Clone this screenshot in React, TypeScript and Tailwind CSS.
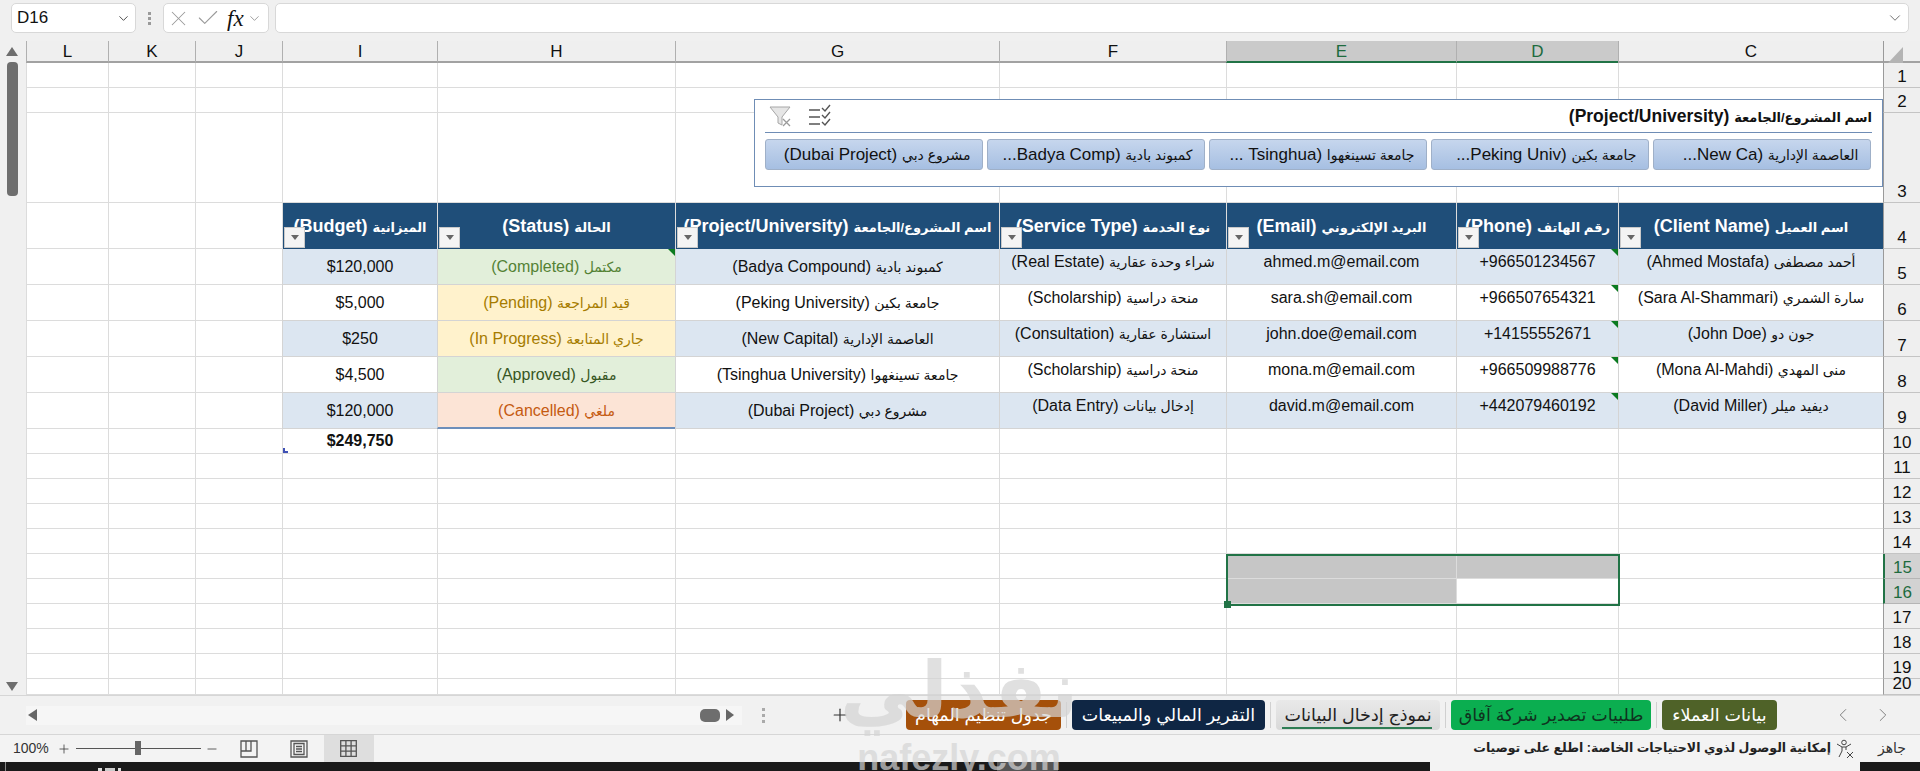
import React from "react";
import { ChevronDown, ChevronLeft, ChevronRight, X, Check, Plus, Minus } from "lucide-react";

const FONT = '"Liberation Sans", "DejaVu Sans", sans-serif';

const LETTERS = ["L", "K", "J", "I", "H", "G", "F", "E", "D", "C"];

type Row = {
  client: string;
  phone: string;
  email: string;
  service: string;
  project: string;
  status: string;
  statusClass: string;
  budget: string;
};

const ROWS: Row[] = [
  { client: "أحمد مصطفى (Ahmed Mostafa)", phone: "+966501234567", email: "ahmed.m@email.com", service: "شراء وحدة عقارية (Real Estate)", project: "كمبوند بادية (Badya Compound)", status: "مكتمل (Completed)", statusClass: "bg-[#e2efda] text-[#548235]", budget: "$120,000" },
  { client: "سارة الشمري (Sara Al-Shammari)", phone: "+966507654321", email: "sara.sh@email.com", service: "منحة دراسية (Scholarship)", project: "جامعة بكين (Peking University)", status: "قيد المراجعة (Pending)", statusClass: "bg-[#fff2cc] text-[#a67c00]", budget: "$5,000" },
  { client: "جون دو (John Doe)", phone: "+14155552671", email: "john.doe@email.com", service: "استشارة عقارية (Consultation)", project: "العاصمة الإدارية (New Capital)", status: "جاري المتابعة (In Progress)", statusClass: "bg-[#fff2cc] text-[#a67c00]", budget: "$250" },
  { client: "منى المهدي (Mona Al-Mahdi)", phone: "+966509988776", email: "mona.m@email.com", service: "منحة دراسية (Scholarship)", project: "جامعة تسينغهوا (Tsinghua University)", status: "مقبول (Approved)", statusClass: "bg-[#e2efda] text-[#375623]", budget: "$4,500" },
  { client: "ديفيد ميلر (David Miller)", phone: "+442079460192", email: "david.m@email.com", service: "إدخال بيانات (Data Entry)", project: "مشروع دبي (Dubai Project)", status: "ملغي (Cancelled)", statusClass: "bg-[#fce4d6] text-[#c55a11]", budget: "$120,000" },
];

const HEADERS = [
  "الميزانية (Budget)",
  "الحالة (Status)",
  "اسم المشروع/الجامعة (Project/University)",
  "نوع الخدمة (Service Type)",
  "البريد الإلكتروني (Email)",
  "رقم الهاتف (Phone)",
  "اسم العميل (Client Name)",
];

const SLICER = [
  "مشروع دبي (Dubai Project)",
  "كمبوند بادية (Badya Comp...",
  "جامعة تسينغهوا (Tsinghua ...",
  "جامعة بكين (Peking Univ...",
  "العاصمة الإدارية (New Ca...",
];

function Mixed({ text, small = false }: { text: string; small?: boolean }) {
  const at = text.indexOf(" (");
  if (at < 0) return <span>{text}</span>;
  return (
    <span>
      <span className={small ? "text-[13px]" : "text-[14px]"}>{text.slice(0, at)}</span>
      {text.slice(at)}
    </span>
  );
}

function Blank({ cls = "" }: { cls?: string }) {
  return <div className={"border-l border-b border-[#dcdcdc] " + cls} />;
}

function Blanks({ n }: { n: number }) {
  return (
    <>
      {Array.from({ length: n }).map((_, i) => (
        <Blank key={i} />
      ))}
    </>
  );
}

function RowNum({ n, active = false }: { n: number; active?: boolean }) {
  return (
    <div
      className={
        "flex items-end justify-center border-b text-[17px] leading-[20px] " +
        (active
          ? "bg-[#d2d2d2] text-[#1e6b3e] border-l-2 border-l-[#217346] border-b-[#b5b5b5]"
          : "bg-[#efefef] text-[#111] border-l border-l-[#9a9a9a] border-b-[#c4c4c4]")
      }
    >
      {n}
    </div>
  );
}

function GreenTick() {
  return <span className="absolute right-0 top-0 h-0 w-0 border-l-[7px] border-t-[7px] border-l-transparent border-t-[#0b7a20]" />;
}

function HeaderCell({ text }: { text: string }) {
  return (
    <div className="relative flex items-center justify-center overflow-hidden whitespace-nowrap border-l border-[#dcdcdc] bg-[#1f4e79] pt-[1px] text-[18px] font-bold text-white" dir="rtl">
      <Mixed text={text} small />
      <span className="absolute bottom-[1px] left-[1px] flex h-[21px] w-[21px] items-center justify-center border border-[#c9c9c9] bg-[#f4f4f4]">
        <span className="h-0 w-0 border-x-[4px] border-t-[5px] border-x-transparent border-t-[#666]" />
      </span>
    </div>
  );
}

function DataCell({ text, cls = "", top = false, tick = false, rtl = true }: { text: string; cls?: string; top?: boolean; tick?: boolean; rtl?: boolean }) {
  return (
    <div
      dir={rtl ? "rtl" : "ltr"}
      className={
        "relative flex justify-center overflow-hidden whitespace-nowrap border-l border-b border-[#d4d4d4] text-[16px] leading-[20px] " +
        (top ? "items-start pt-[3px] " : "items-center pt-[1px] ") +
        cls
      }
    >
      <Mixed text={text} />
      {tick && <GreenTick />}
    </div>
  );
}

function DataRow({ r, i }: { r: Row; i: number }) {
  const band = i % 2 === 0 ? "bg-[#dce6f1] text-[#111]" : "bg-white text-[#111]";
  return (
    <>
      <Blanks n={3} />
      <DataCell text={r.budget} cls={band} rtl={false} />
      <DataCell text={r.status} cls={r.statusClass + (i === 4 ? " border-b-2 border-b-[#6d8fbb]" : "")} tick={i === 0} />
      <DataCell text={r.project} cls={band} />
      <DataCell text={r.service} cls={band} top />
      <DataCell text={r.email} cls={band} top rtl={false} />
      <DataCell text={r.phone} cls={band} top tick rtl={false} />
      <DataCell text={r.client} cls={band} top />
      <RowNum n={5 + i} />
    </>
  );
}

function Slicer() {
  return (
    <div className="absolute left-[728px] top-[58px] flex h-[88px] w-[1129px] flex-col border border-[#6f8db5] bg-white px-[10px]">
      <div className="flex h-[33px] items-center justify-between border-b border-[#6f8db5]">
        <div className="flex items-center gap-[16px] pl-[3px]">
          <svg width="24" height="24" viewBox="0 0 24 24" fill="none">
            <path d="M2 3h20l-8 10v8l-4-2v-6z" fill="#e6e6e6" stroke="#a6a6a6" />
            <path d="M15 15l7 7M22 15l-7 7" stroke="#9a9a9a" strokeWidth="1.3" />
          </svg>
          <svg width="24" height="24" viewBox="0 0 24 24" fill="none" stroke="#555" strokeWidth="1.4">
            <path d="M1 6h11M1 13h11M1 20h11" />
            <path d="M14 4l3 3 5-6M14 11l3 3 5-6M14 18l3 3 5-6" />
          </svg>
        </div>
        <span dir="rtl" className="text-[17.5px] font-bold text-[#111]">
          <Mixed text="اسم المشروع/الجامعة (Project/University)" small />
        </span>
      </div>
      <div className="mt-[6px] flex gap-[4.5px]">
        {SLICER.map((t) => (
          <div
            key={t}
            dir="rtl"
            className="flex h-[31px] w-[217.5px] items-center overflow-hidden whitespace-nowrap rounded-[3px] border border-[#9fb0c8] bg-gradient-to-b from-[#c6d6ed] to-[#a6bfe2] px-[11px] text-[17px] text-[#111]"
          >
            <Mixed text={t} />
          </div>
        ))}
      </div>
    </div>
  );
}

function Selection() {
  return (
    <div className="absolute left-[1200px] top-[513px] h-[52px] w-[394px] border-2 border-[#217346]">
      <span className="absolute -bottom-[4px] -left-[4px] h-[7px] w-[7px] bg-[#217346]" />
    </div>
  );
}

function SheetTab({ text, cls }: { text: string; cls: string }) {
  return (
    <div dir="rtl" className={"flex h-[30px] items-center justify-center whitespace-nowrap rounded-[4px] text-[17.5px] " + cls}>
      {text}
    </div>
  );
}

function TabDivider() {
  return <span className="h-[26px] w-px bg-[#d0d0d0]" />;
}

function TabsBar() {
  return (
    <div className="flex h-[40px] items-center border-y border-[#d6d6d6] bg-[#f1f1f1]">
      <div className="ml-[26px] flex h-[19px] w-[716px] items-center bg-[#f6f6f6] pl-[2px] pr-[8px]">
        <span className="h-0 w-0 border-y-[6px] border-r-[9px] border-y-transparent border-r-[#666]" />
        <span className="ml-auto h-[13px] w-[20px] rounded-[5px] bg-[#6e6e6e]" />
        <span className="ml-[6px] h-0 w-0 border-y-[6px] border-l-[8px] border-y-transparent border-l-[#666]" />
      </div>
      <div className="ml-[20px] flex flex-col gap-[3px]">
        <span className="h-[3px] w-[3px] bg-[#aaa]" />
        <span className="h-[3px] w-[3px] bg-[#aaa]" />
        <span className="h-[3px] w-[3px] bg-[#aaa]" />
      </div>
      <Plus size={20} strokeWidth={1.4} className="ml-[65px] text-[#333]" />
      <div className="ml-[56px] flex items-center gap-[5px]">
        <SheetTab text="جدول تنظيم المهام" cls="w-[155px] bg-[#a5500a] text-white" />
        <TabDivider />
        <SheetTab text="التقرير المالي والمبيعات" cls="w-[193px] bg-[#0f2644] text-white" />
        <TabDivider />
        <div dir="rtl" className="relative flex h-[30px] w-[164px] items-center justify-center whitespace-nowrap rounded-[4px] bg-gradient-to-b from-[#e9e9e9] to-[#d9d9d9] text-[17.5px] text-[#222]">
          نموذج إدخال البيانات
          <span className="absolute bottom-[1px] left-[6px] right-[8px] h-[2px] bg-[#2e7d54]" />
        </div>
        <TabDivider />
        <SheetTab text="طلبيات تصدير شركة آفاق" cls="w-[200px] bg-[#0bae50] text-[#10331f]" />
        <TabDivider />
        <SheetTab text="بيانات العملاء" cls="w-[115px] bg-[#4f6228] text-white" />
      </div>
      <ChevronLeft size={22} strokeWidth={1} className="ml-[55px] text-[#777]" />
      <ChevronRight size={22} strokeWidth={1} className="ml-[18px] text-[#777]" />
    </div>
  );
}

function StatusBar() {
  return (
    <div className="flex h-[27px] items-center bg-[#f3f3f3] text-[#222]">
      <span className="ml-[13px] text-[14px] text-[#333]">100%</span>
      <Plus size={14} strokeWidth={1.3} className="ml-[8px] text-[#333]" />
      <div className="relative ml-[5px] h-px w-[125px] bg-[#555]">
        <span className="absolute left-[59px] -top-[7px] h-[14px] w-[6px] bg-[#666]" />
      </div>
      <Minus size={14} strokeWidth={1.3} className="ml-[4px] text-[#333]" />
      <svg className="ml-[21px]" width="18" height="18" viewBox="0 0 18 18" fill="none" stroke="#555" strokeWidth="1.3">
        <path d="M1 1h16v16H1zM1 11h10V1M6 1v10" />
      </svg>
      <svg className="ml-[32px]" width="18" height="18" viewBox="0 0 18 18" fill="none" stroke="#555" strokeWidth="1.3">
        <path d="M1 1h16v16H1zM4 3.5h10v11H4zM6 6.5h6M6 9h6M6 11.5h6" />
      </svg>
      <div className="ml-[16px] flex h-[27px] w-[50px] items-center justify-center bg-[#dedede]">
        <svg width="17" height="17" viewBox="0 0 17 17" fill="none" stroke="#555" strokeWidth="1.3">
          <path d="M.7.7h15.6v15.6H.7zM.7 5.9h15.6M.7 11.1h15.6M5.9.7v15.6M11.1.7v15.6" />
        </svg>
      </div>
      <span dir="rtl" className="ml-auto text-[12.5px] font-bold text-[#222]">
        إمكانية الوصول لذوي الاحتياجات الخاصة: اطلع على توصيات
      </span>
      <svg className="ml-[5px]" width="18" height="20" viewBox="0 0 18 20" fill="none" stroke="#444" strokeWidth="1">
        <circle cx="8" cy="3.5" r="2.3" />
        <path d="M1 5l5 3h4l5-3M6 8v4l-3 6M10 8v3M11 13l6 6M17 13l-6 6" />
      </svg>
      <span dir="rtl" className="ml-[24px] mr-[14px] text-[14px] text-[#333]">جاهز</span>
    </div>
  );
}

function Taskbar() {
  return (
    <div className="flex h-[9px] bg-[#1a1a1a]">
      <span className="ml-[5px] h-[9px] w-px bg-[#888]" />
      <span className="ml-[92px] mt-[6px] h-[3px] w-[4px] bg-[#ddd]" />
      <span className="ml-[3px] mt-[6px] h-[3px] w-[10px] bg-[#ccc]" />
      <span className="ml-[3px] mt-[6px] h-[3px] w-[3px] bg-[#ddd]" />
      <span className="ml-[876px] h-[9px] w-[61px] bg-[#555]" />
      <span className="ml-[372px] h-[9px] w-[430px] bg-[#f3f3f3]" />
    </div>
  );
}

function Watermark() {
  return (
    <div className="pointer-events-none absolute left-[852px] top-[640px] flex w-[214px] flex-col items-center text-[#d4d4d4] opacity-70">
      <span dir="rtl" className="whitespace-nowrap text-[78px] font-bold leading-[100px]" style={{ fontFamily: '"DejaVu Sans", sans-serif' }}>نفذلي</span>
      <span className="whitespace-nowrap text-[36px] font-bold leading-[36px]">nafezly.com</span>
    </div>
  );
}

function Sheet() {
  const rowNums = [11, 12, 13, 14, 15, 16, 17, 18, 19, 20];
  return (
    <div className="relative min-w-0 flex-1 overflow-hidden">
      <div className="grid h-[654px] grid-cols-[82px_87px_87px_155px_238px_324px_227px_230px_162px_265px_37px] grid-rows-[22px_25px_25px_90px_46px_36px_36px_36px_36px_36px_25px_25px_25px_25px_25px_25px_25px_25px_25px_25px_16px] bg-white">
        {LETTERS.map((l) => {
          const on = l === "E" || l === "D";
          return (
            <div
              key={l}
              className={
                "flex items-center justify-center border-l pt-[2px] text-[17px] " +
                (on
                  ? "border-[#b0b0b0] border-b-2 border-b-[#217346] bg-[#cacaca] text-[#1e6b3e]"
                  : "border-[#b0b0b0] border-b-2 border-b-[#a2a2a2] bg-[#efefef] text-[#111]")
              }
            >
              {l}
            </div>
          );
        })}
        <div className="relative border-b-2 border-l border-b-[#a2a2a2] border-l-[#9a9a9a] bg-[#efefef]">
          <span className="absolute left-[4px] top-[6px] h-0 w-0 border-b-[16px] border-l-[15px] border-b-[#b4b4b4] border-l-transparent" />
        </div>

        <Blanks n={10} />
        <RowNum n={1} />
        <Blanks n={10} />
        <RowNum n={2} />
        <Blanks n={10} />
        <RowNum n={3} />

        <Blanks n={3} />
        {HEADERS.map((h) => (
          <HeaderCell key={h} text={h} />
        ))}
        <RowNum n={4} />

        {ROWS.map((r, i) => (
          <DataRow key={r.email} r={r} i={i} />
        ))}

        <Blanks n={3} />
        <div className="relative flex items-center justify-center border-b border-l border-[#dcdcdc] text-[16px] font-bold text-[#111]">
          $249,750
          <span className="absolute bottom-0 left-0 h-[5px] w-[2px] bg-[#3f51b5]" />
          <span className="absolute bottom-0 left-0 h-[2px] w-[5px] bg-[#3f51b5]" />
        </div>
        <Blanks n={6} />
        <RowNum n={10} />

        {rowNums.map((n) => (
          <React.Fragment key={n}>
            <Blanks n={7} />
            <Blank cls={n === 15 || n === 16 ? "bg-[#c6c6c6]" : ""} />
            <Blank cls={n === 15 ? "bg-[#c6c6c6]" : ""} />
            <Blank />
            <RowNum n={n} active={n === 15 || n === 16} />
          </React.Fragment>
        ))}
      </div>
      <Slicer />
      <Selection />
    </div>
  );
}

export default function App() {
  return (
    <div className="relative flex h-[771px] w-[1920px] flex-col overflow-hidden bg-[#f0f0f0]" style={{ fontFamily: FONT }}>
      <div className="flex h-[41px] items-start gap-[6px] pl-[11px] pr-[11px] pt-[3px]">
        <div className="flex h-[30px] w-[125px] items-center justify-between rounded-[5px] border border-[#d8d8d8] bg-white pl-[5px] pr-[4px] text-[17px] text-[#111]">
          D16
          <ChevronDown size={15} strokeWidth={1.5} className="text-[#444]" />
        </div>
        <div className="mx-[6px] mt-[9px] flex flex-col gap-[2px]">
          <span className="h-[3px] w-[3px] bg-[#9a9a9a]" />
          <span className="h-[3px] w-[3px] bg-[#9a9a9a]" />
          <span className="h-[3px] w-[3px] bg-[#9a9a9a]" />
        </div>
        <div className="flex h-[30px] w-[106px] items-center rounded-[5px] border border-[#d8d8d8] bg-white pl-[2px] pr-[2px]">
          <X size={25} strokeWidth={1} className="text-[#9a9a9a]" />
          <Check size={26} strokeWidth={1} className="ml-[4px] text-[#9a9a9a]" />
          <span className="ml-[6px] text-[23px] italic leading-none text-[#111]" style={{ fontFamily: '"Liberation Serif", serif' }}>fx</span>
          <ChevronDown size={15} strokeWidth={1} className="ml-[3px] text-[#666]" />
        </div>
        <div className="flex h-[30px] min-w-0 flex-1 items-center justify-end rounded-[5px] border border-[#d8d8d8] bg-white pr-[4px]">
          <ChevronDown size={18} strokeWidth={1} className="text-[#444]" />
        </div>
      </div>

      <div className="flex h-[654px]">
        <div className="flex w-[26px] flex-col items-center bg-[#f0f0f0] pr-[2px] pt-[6px]">
          <span className="h-0 w-0 border-x-[6px] border-b-[9px] border-x-transparent border-b-[#6e6e6e]" />
          <span className="mt-[6px] h-[134px] w-[11px] rounded-[4px] bg-[#6e6e6e]" />
          <span className="mt-auto mb-[4px] h-0 w-0 border-x-[6px] border-t-[9px] border-x-transparent border-t-[#6e6e6e]" />
        </div>
        <Sheet />
      </div>

      <TabsBar />
      <StatusBar />
      <Taskbar />
      <Watermark />
    </div>
  );
}
